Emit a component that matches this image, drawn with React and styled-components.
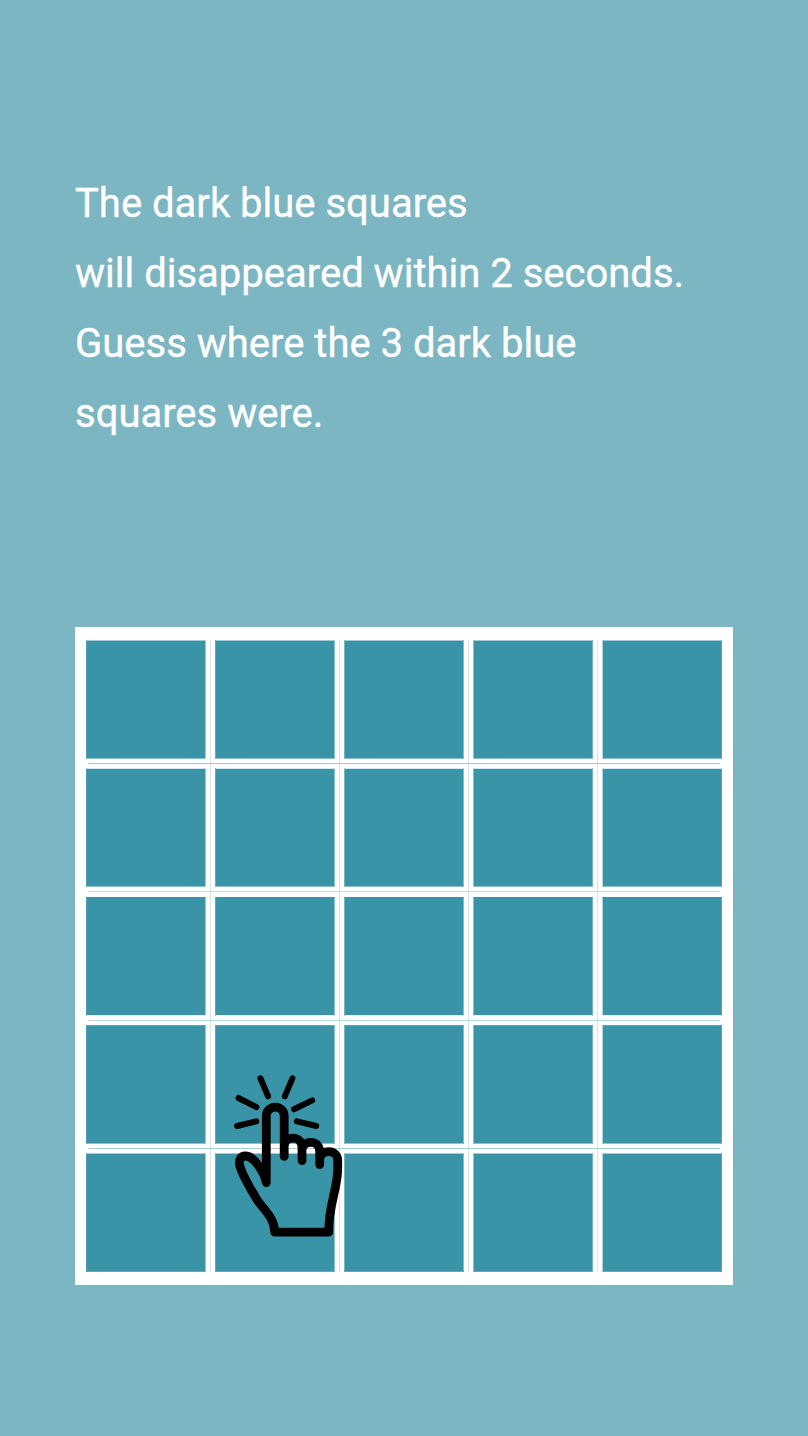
import React from "react";
import styled, { createGlobalStyle } from "styled-components";

const GlobalStyle = createGlobalStyle`
  * { box-sizing: border-box; }
  body { margin: 0; background: #7bb6c2; }
`;

const Screen = styled.main`
  min-height: 1436px;
  padding: 169px 75px 0;
  background: #7bb6c2;
  font-family: Roboto, "Liberation Sans", sans-serif;
`;

const Instructions = styled.p`
  margin: 0 0 178px;
  color: #fff;
  font-size: 40px;
  line-height: 70px;
  white-space: nowrap;
  -webkit-text-stroke: 0.35px #fff;
`;

const Board = styled.section`
  position: relative;
  width: 658px;
  height: 658px;
  padding: 13px 11px;
  background: #fff;
  display: grid;
  grid-template-columns: repeat(5, 120px);
  grid-template-rows: repeat(5, 119px);
  column-gap: 9px;
  row-gap: 9.25px;
`;

const leftEdges = ["#4d9eaf", "#62a9b7", "#7ab6c2", "#92c3cd", "#b0d4db"];
const rightEdges = ["#9cc9d2", "#8fc2cc", "#83bbc6", "#75b3c0", "#5aa5b4"];
const topEdges = ["#a5ccd4", "#d3e6ea", "#3a94a7", "#5fa8b6", "#a5ccd4"];
const bottomEdges = ["#8fc0ca", "#8fc0ca", "#e6f2f4", "#8fc0ca", "#62a9b7"];

const Cell = styled.button`
  appearance: none;
  padding: 0;
  border: 1px solid;
  border-color: ${(p) =>
    `${topEdges[p.$row]} ${rightEdges[p.$column]} ${bottomEdges[p.$row]} ${leftEdges[p.$column]}`};
  border-radius: 0;
  background: #3a94a7;
`;

const Rule = styled.i`
  position: absolute;
  background: ${(p) => p.$color};
  ${(p) =>
    p.$vertical
      ? `left: ${p.$at}px; top: 13px; width: 1px; height: 632px;`
      : `top: ${p.$at}px; left: 13px; height: 1px; width: 632px;`}
`;

const Pointer = styled.svg`
  position: absolute;
  left: 150px;
  top: 438px;
  width: 130px;
  height: 180px;
  fill: none;
  stroke: #000;
  stroke-linecap: round;
  stroke-linejoin: round;
  pointer-events: none;
`;

const lines = ["The dark blue squares", "will disappeared within 2 seconds.", "Guess where the 3 dark blue", "squares were."];
const columnRules = [135, 264, 393, 522];
const rowRules = [136, 264, 393, 521];

export default function App() {
  return (
    <>
      <GlobalStyle />
      <Screen>
        <Instructions>
          {lines.map((line, i) => (
            <React.Fragment key={line}>
              {i > 0 && <br />}
              {line}
            </React.Fragment>
          ))}
        </Instructions>
        <Board>
          {Array.from({ length: 25 }, (_, i) => (
            <Cell key={i} $row={Math.floor(i / 5)} $column={i % 5} aria-label={`Square ${i + 1}`} />
          ))}
          {columnRules.map((at) => (
            <Rule key={at} $vertical $at={at} $color="#d2e6ea" />
          ))}
          {rowRules.map((at, i) => (
            <Rule key={at} $at={at} $color={["#a4cbd3", "#c5dfe4", "#b4d5db", "#a8ced6"][i]} />
          ))}
          <Pointer viewBox="225 1065 130 180">
            <path
              strokeWidth="6"
              d="M260.4 1078.3 268.1 1096.3M292.4 1078.3 284.8 1096.3M238.5 1098 256.4 1107.2M312.2 1100.4 294 1109.3M237 1126 256.2 1121.3M296.9 1121.3 316.2 1126"
            />
            <path
              strokeWidth="8.8"
              d="M284.2 1156.4V1116A8.95 8.95 0 0 0 266.3 1116V1182.6C265 1175 255.5 1156 245.2 1156C240.7 1156 238.4 1160.2 239.7 1165.5C241.5 1173 251.5 1191 257.5 1200.3C264 1210 274.7 1218 274.7 1232.2H328.7C328.7 1203 337.7 1190 337.7 1168V1160.3C337.7 1154.8 333.7 1151.7 328.8 1151.7C323.8 1151.7 319.7 1155 319.7 1160V1164.6V1151.5C319.7 1145.8 315.8 1142.3 310.8 1142.3C305.8 1142.3 302 1145.5 302 1150.5V1160.6V1147.5C302 1141.7 298 1138.2 293 1138.2C288 1138.2 284.2 1141.4 284.2 1146.4"
            />
          </Pointer>
        </Board>
      </Screen>
    </>
  );
}
